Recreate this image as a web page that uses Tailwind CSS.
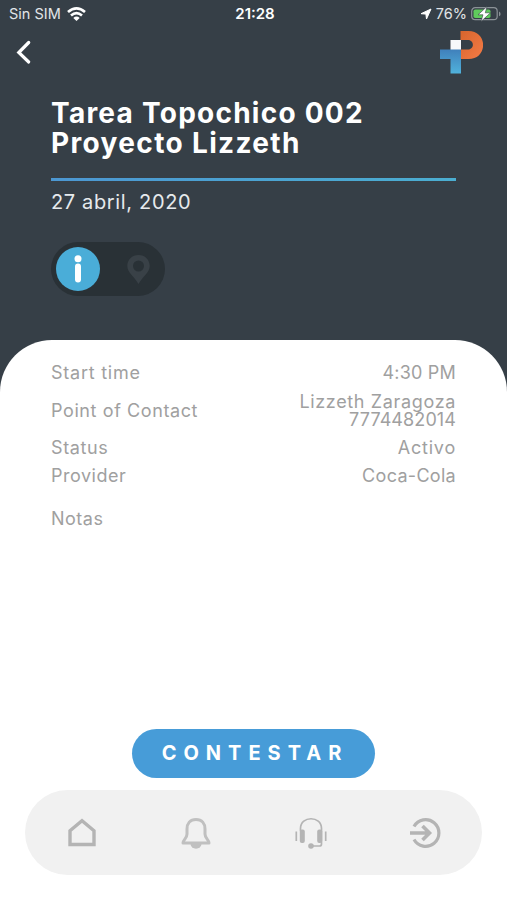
<!DOCTYPE html>
<html lang="es">
<head>
  <meta charset="UTF-8" />
  <meta name="viewport" content="width=device-width, initial-scale=1.0"/>
  <title>Tarea Topochico 002</title>
  <script src="https://cdn.jsdelivr.net/npm/@tailwindcss/browser@4"></script>
</head>
<body class="bg-[#363f47] font-['Inter',sans-serif]">

  <div class="w-[507px] h-[900px] flex flex-col overflow-hidden">

    <!-- Status bar -->
    <div class="h-7 grid grid-cols-3 items-center pl-[9px] pr-[6px] text-[14px] text-[#e1e5e8]">
      <div class="flex items-center gap-[6px]">
        <span class="text-[14.5px]">Sin SIM</span>
        <svg width="19" height="14" viewBox="0 0 19 14" fill="none" stroke="#fff" stroke-width="2.7">
          <path d="M1 5 Q9.500 -2.200 18 5"/>
          <path d="M4 8.500 Q9.500 3.900 15 8.500"/>
          <path d="M9.500 13.900 L6.300 10.900 Q9.500 8.300 12.700 10.900 Z" fill="#fff" stroke="none"/>
        </svg>
      </div>
      <span class="text-center font-semibold text-[15px] text-white">21:28</span>
      <div class="flex items-center justify-end gap-1">
        <svg width="12" height="12" viewBox="0 0 12 12" fill="#fff" stroke="#fff" stroke-linejoin="round"><path d="M11 1 L1 5.700 L5.900 6.100 L6.500 11 Z"/></svg>
        <span class="text-[14.5px]">76%</span>
        <svg width="30" height="16" viewBox="0 0 30 16">
          <rect x="0.700" y="1.700" width="25.500" height="12" rx="3.500" fill="none" stroke="#8b9297" stroke-width="1.200"/>
          <rect x="2.500" y="3.500" width="17" height="8.500" rx="1.800" fill="#5fcb5c"/>
          <path d="M28 5.500 V10.200 Q29.600 9.500 29.600 7.900 Q29.600 6.200 28 5.500" fill="#8b9297"/>
          <path d="M16 0.500 L7 8.800 H12 L10 15.500 L19.500 6.800 H14.300 Z" fill="#fff" stroke="#363f47" stroke-width="0.600"/>
        </svg>
      </div>
    </div>

    <!-- Back and logo -->
    <div class="h-[52px] flex justify-between pl-4 pr-6">
      <svg class="mt-3" width="16" height="25" viewBox="0 0 16 25" fill="none" stroke="#fff" stroke-width="3.200" stroke-linecap="round"><path d="M12.700 2.500 L2.800 12.500 L12.700 22"/></svg>
      <svg class="mt-[3px]" width="43" height="43" viewBox="0 0 43 43">
        <defs>
          <linearGradient id="blue" x1="0" y1="0" x2="0" y2="1"><stop offset="0" stop-color="#4080bb"/><stop offset="1" stop-color="#50b2dc"/></linearGradient>
          <linearGradient id="orange" x1="0" y1="0" x2="1" y2="1"><stop offset="0" stop-color="#d7652d"/><stop offset="1" stop-color="#f47b46"/></linearGradient>
        </defs>
        <path d="M20.500 0 H28.500 C48 0 48 28 28.500 28 H20.500 V18.500 H28 C34.500 18.500 34.500 9 28 9 H20.500 Z" fill="url(#orange)"/>
        <rect x="10.500" y="9" width="10.500" height="10" fill="#f7f8fa"/>
        <path d="M0 18.500 H21 V42.500 H10.500 V28 H0 Z" fill="url(#blue)"/>
      </svg>
    </div>

    <!-- Header -->
    <div class="h-[260px] shrink-0 px-[51px] pt-[18px] text-white">
      <h1 class="text-[28px] leading-[30px] font-bold"><span class="block tracking-[1.25px]">Tarea Topochico 002</span><span class="block tracking-[1.35px]">Proyecto Lizzeth</span></h1>
      <div class="mt-5 w-[405px] h-[3px] bg-linear-to-r from-[#4c97d2] to-[#4baed1]"></div>
      <p class="mt-[7px] text-[20px] leading-[28px] text-[#e6eaed] tracking-[0.65px]">27 abril, 2020</p>

      <!-- Tabs -->
      <div class="mt-[26px] w-[114px] h-[54px] rounded-full bg-[#293136] flex items-center justify-between pl-[5px] pr-[15px]">
        <div class="size-11 rounded-full bg-[#4aadd8] flex items-center justify-center">
          <svg width="8" height="28" viewBox="0 0 8 28" fill="#fff"><circle cx="4" cy="3.800" r="3.500"/><rect x="1" y="8.500" width="6" height="19" rx="3"/></svg>
        </div>
        <svg width="23" height="29" viewBox="0 0 23 29" fill="#394147"><path fill-rule="evenodd" d="M11.500 0 C5 0 0.300 4.800 0.300 11 C0.300 17.500 7 21 11.500 29 C16 21 22.700 17.500 22.700 11 C22.700 4.800 18 0 11.500 0 Z M11.500 5.500 A5.500 5.500 0 1 1 11.500 16.500 A5.500 5.500 0 1 1 11.500 5.500 Z"/></svg>
      </div>
    </div>

    <!-- Details -->
    <div class="flex-1 flex flex-col items-center bg-white rounded-t-[52px] pt-[19px]">
      <div class="w-[405px] text-[18px] leading-[18px] text-[#a0a0a0]">
        <div class="h-7 flex items-center justify-between">
          <span class="tracking-[0.75px]">Start time</span>
          <span class="tracking-[0.2px]">4:30 PM</span>
        </div>
        <div class="h-[47px] flex items-center justify-between">
          <span class="tracking-[0.6px]">Point of Contact</span>
          <span class="text-right"><span class="block tracking-[0.65px]">Lizzeth Zaragoza</span><span class="block tracking-[0.1px]">7774482014</span></span>
        </div>
        <div class="h-7 flex items-center justify-between">
          <span class="tracking-[0.6px]">Status</span>
          <span class="tracking-[0.8px]">Activo</span>
        </div>
        <div class="h-7 flex items-center justify-between">
          <span class="tracking-[0.5px]">Provider</span>
          <span class="tracking-[0.3px]">Coca-Cola</span>
        </div>
        <div class="h-7 mt-[15px] flex items-center">
          <span class="tracking-[0.5px]">Notas</span>
        </div>
      </div>

      <button class="mt-auto w-[243px] h-[49px] shrink-0 rounded-full bg-[#479cd8] text-white text-[20px] font-bold tracking-[7px] pl-[3px] pb-[2px]">CONTESTAR</button>

      <!-- Bottom nav -->
      <nav class="mt-3 mb-[25px] w-[457px] h-[85px] shrink-0 rounded-full bg-[#f1f1f1] grid grid-cols-4 items-center justify-items-center text-[#b4b4b4]">
        <svg width="34" height="34" viewBox="0 0 34 34" fill="none" stroke="currentColor" stroke-width="3.400"><path d="M5 28.500 V14.800 L17 4.800 L29 14.800 V28.500 Z"/></svg>
        <svg width="34" height="34" viewBox="0 0 34 34" fill="none" stroke="#c0c0c0" stroke-width="3" stroke-linejoin="round"><path d="M17 3.500 C11 3.500 8 7.500 8 13 V18 C8 22.500 4 24 4 27 H30 C30 24 26 22.500 26 18 V13 C26 7.500 23 3.500 17 3.500 Z"/><path d="M11.500 28 A5.500 4.700 0 0 0 22.500 28 Z" fill="#c0c0c0" stroke="none"/></svg>
        <svg width="34" height="34" viewBox="0 0 34 34" fill="none" stroke="currentColor" stroke-width="1.700"><path d="M6.500 15 V12.500 C6.500 -0.500 27.500 -0.500 27.500 12.500 V28 Q27.500 30 25.500 30 H17"/><rect x="5.800" y="13.500" width="5" height="13.500" rx="2" fill="currentColor" stroke="none"/><rect x="23.200" y="13.500" width="5" height="13.500" rx="2" fill="currentColor" stroke="none"/><path d="M2.300 15.500 V25 M31.700 15.500 V25"/><circle cx="17" cy="30" r="2.800" fill="currentColor" stroke="none"/></svg>
        <svg width="34" height="34" viewBox="0 0 34 34" fill="none" stroke="currentColor" stroke-width="3.200"><path d="M6 10.500 A13.300 13.300 0 1 1 6 23.500"/><path d="M2 17 H21 M14.500 10 L21.500 17 L14.500 24" stroke-width="3.600"/></svg>
      </nav>
    </div>

  </div>

</body>
</html>
